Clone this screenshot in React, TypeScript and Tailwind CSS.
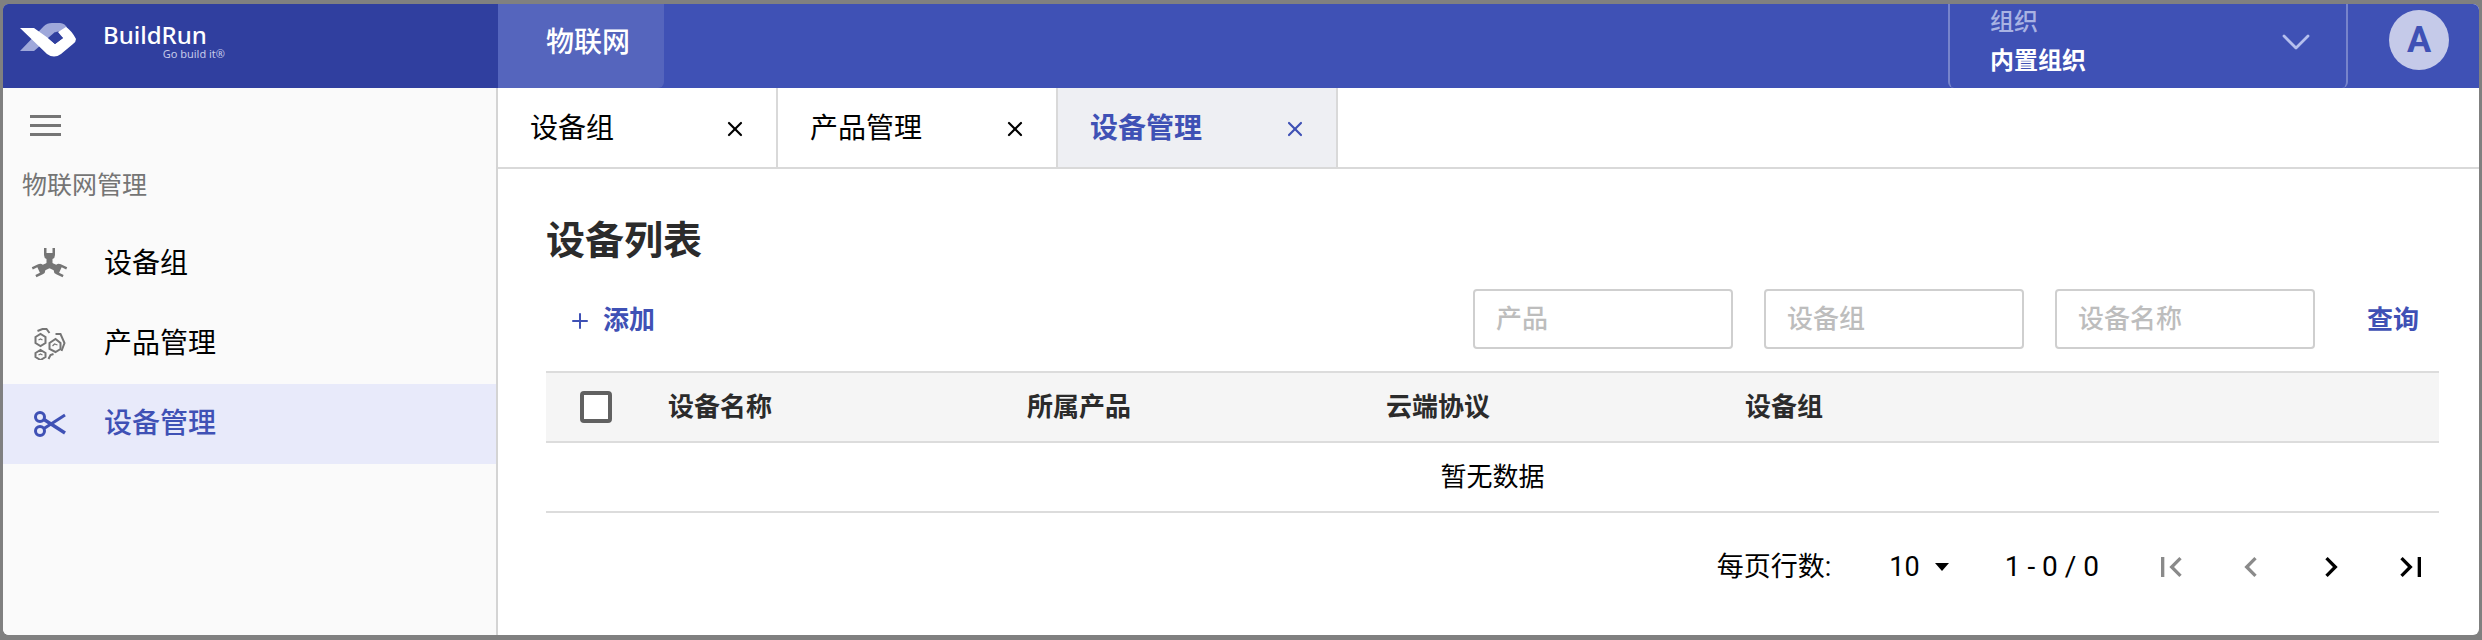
import { ChevronDown, Plus, X } from 'lucide-react'

const tabs = [
  { label: '设备组', active: false },
  { label: '产品管理', active: false },
  { label: '设备管理', active: true },
]

const columns = ['设备名称', '所属产品', '云端协议', '设备组']

function Logo() {
  return (
    <svg width="56" height="34" viewBox="0 0 56 34" className="shrink-0">
      <path d="M0 28 L24 3 Q27 0 32 0 L40 0 Q45 0 48 6 L36 9 L14 28 Z" fill="#9fa8da" />
      <path d="M0 5 L14 5 L28 15 L35 21 L43 15 L38 9 L46 4 Q52 8 56 16 Q56 19 53 21 L41 31 Q34 36 27 31 Z" fill="#ffffff" />
      <path d="M28 15 L35 9 L43 15 L35 21 Z" fill="#303f9f" />
    </svg>
  )
}

function WrenchIcon() {
  const head = 'M11 0 L11 7 Q11 10 13.5 11 L13.5 19 L19.5 19 L19.5 11 Q22 10 22 7 L22 0 L19.5 0 L19.5 5 L13.5 5 L13.5 0 Z'
  return (
    <svg width="33" height="32" viewBox="0 0 33 32" fill="#757575" className="shrink-0 overflow-visible">
      <path d={head} />
      <path d={head} transform="rotate(115 16.5 17)" />
      <path d={head} transform="rotate(-115 16.5 17)" />
    </svg>
  )
}

function HexesIcon() {
  return (
    <svg width="33" height="32" viewBox="0 0 32 32" fill="none" stroke="#757575" strokeWidth="2" className="shrink-0">
      <path d="M2 9 L7 6 L12 9 L12 15 L7 18 L2 15 Z" />
      <path d="M4 3 L9 1 L13 1 L16 5" />
      <path d="M16 15 L22 11 L27 15 L27 21 L22 24 L16 21 Z" />
      <path d="M22 6 L27 6 L31 15 L28 23" />
      <path d="M2 25 L7 22 L12 25 L12 29 L7 32 L2 29 Z" />
      <path d="M15 31 L17 27 L20 26" />
      <path d="M5 12 L7 11 L9 12 M19 18 L21 16 L24 17 M5 27 L7 26 L9 27" strokeWidth="1.2" />
    </svg>
  )
}

function ScissorsIcon() {
  return (
    <svg width="33" height="28" viewBox="0 0 33 28" fill="none" stroke="currentColor" className="shrink-0">
      <circle cx="7" cy="7" r="4.5" strokeWidth="3" />
      <circle cx="7" cy="21" r="4.5" strokeWidth="3" />
      <path d="M11 9.5 L32 23" strokeWidth="3.4" />
      <path d="M11 18.5 L32 5" strokeWidth="3" />
    </svg>
  )
}

// material paging glyphs, the reference draws them at ~40px
function PageIcon({ d, className }: { d: string; className: string }) {
  return (
    <svg className={className} width="40" height="40" viewBox="0 0 24 24" fill="currentColor">
      <path d={d} />
    </svg>
  )
}

function SearchField({ placeholder }: { placeholder: string }) {
  return (
    <div className="flex h-[60px] w-[260px] items-center rounded-[4px] border-2 border-[#cfcfcf] pl-[21px] text-[26px] font-medium text-[#bdbdbd]">
      {placeholder}
    </div>
  )
}

export default function App() {
  return (
    <div className="h-[640px] w-[2482px] overflow-hidden bg-[#808080] pb-[5px] pl-[3px] pr-[3px] pt-[4px] font-['Roboto','Noto_Sans_CJK_SC',sans-serif]">
      <div className="flex h-[631px] flex-col overflow-hidden rounded-[6px] bg-white">
        {/* top bar */}
        <header className="flex h-[84px] shrink-0 bg-[#3f51b5] text-white">
          <div className="flex w-[495px] items-start bg-[#303f9f] pl-[17px] pt-[19px]">
            <Logo />
            <div className="ml-[27px] w-[122px] font-['Noto_Sans',sans-serif]">
              <div className="text-[24px] font-medium leading-[24px]">BuildRun</div>
              <div className="mt-[1px] text-right text-[11px] leading-[11px] text-[#c5cae9]">Go build it®</div>
            </div>
          </div>
          <div className="flex w-[166px] items-center justify-center rounded-br-[6px] bg-[#5565bd] pb-[6px] pl-[14px] text-[28px] font-medium">物联网</div>
          <div className="flex-1" />
          <div className="flex w-[400px] items-center justify-between rounded-b-[6px] border-x-2 border-[#7784cb] pl-[40px] pr-[26px]">
            <div>
              <div className="mt-[-9px] text-[24px] font-medium leading-[30px] text-[#a9b3e3]">组织</div>
              <div className="mt-[9px] text-[24px] font-bold leading-[30px]">内置组织</div>
            </div>
            <ChevronDown size={48} strokeWidth={1.4} className="mb-[9px] text-[#b5bfee]" />
          </div>
          <div className="flex w-[131px] items-start justify-center pl-[11px] pt-[6px]">
            <div className="flex h-[60px] w-[60px] items-center justify-center rounded-full bg-[#c5cae9] text-[36px] font-bold text-[#3f51b5]">A</div>
          </div>
        </header>

        <div className="flex min-h-0 flex-1">
          {/* sidebar */}
          <aside className="w-[495px] shrink-0 border-r-2 border-[#d4d4d4] bg-[#fafafa]">
            <div className="pl-[27px] pt-[27px]">
              <div className="flex h-[21px] w-[31px] flex-col justify-between">
                <div className="h-[3px] bg-[#757575]" />
                <div className="h-[3px] bg-[#757575]" />
                <div className="h-[3px] bg-[#757575]" />
              </div>
            </div>
            <div className="pl-[19px] pt-[34px] text-[25px] leading-[32px] text-[#757575]">物联网管理</div>
            <nav className="mt-[22px]">
              <div className="flex h-[80px] items-center gap-[38px] pl-[30px] text-[28px] text-black">
                <WrenchIcon />
                设备组
              </div>
              <div className="flex h-[80px] items-center gap-[38px] pl-[30px] text-[28px] text-black">
                <HexesIcon />
                产品管理
              </div>
              <div className="flex h-[80px] items-center gap-[38px] bg-[#e8eafa] pl-[30px] text-[28px] font-medium text-[#3f51b5]">
                <ScissorsIcon />
                设备管理
              </div>
            </nav>
          </aside>

          <main className="flex min-w-0 flex-1 flex-col">
            {/* tab strip */}
            <div className="flex h-[81px] shrink-0 border-b-2 border-[#d9d9d9]">
              {tabs.map((t) => (
                <div
                  key={t.label}
                  className={`flex w-[280px] items-center justify-between border-r-2 border-[#d9d9d9] pl-[32px] pr-[29px] pt-[3px] text-[28px] ${t.active ? 'bg-[#eeeff3] font-bold text-[#3f51b5]' : 'text-black'}`}
                >
                  {t.label}
                  <X size={24} strokeWidth={2.2} className={t.active ? 'text-[#3f51b5]' : 'text-black'} />
                </div>
              ))}
            </div>

            <div className="flex flex-1 flex-col pl-[48px] pr-[40px]">
              <h1 className="pt-[47px] text-[39px] font-bold leading-[50px] text-[#2b2b2b]">设备列表</h1>

              <div className="mt-[23px] flex h-[60px] items-center">
                <div className="flex items-center pl-[22px] pt-[3px] text-[26px] font-bold text-[#3f51b5]">
                  <Plus size={24} strokeWidth={2} className="mr-[11px]" />
                  添加
                </div>
                <div className="flex-1" />
                <div className="flex items-center gap-[31px]">
                  <SearchField placeholder="产品" />
                  <SearchField placeholder="设备组" />
                  <SearchField placeholder="设备名称" />
                </div>
                <div className="ml-[52px] mr-[20px] pt-[3px] text-[26px] font-bold text-[#3f51b5]">查询</div>
              </div>

              {/* table */}
              <div className="mt-[22px] flex h-[72px] items-center border-y-2 border-[#dcdcdc] bg-[#f5f5f5] text-[26px] font-bold text-[#2b2b2b]">
                <div className="ml-[34px] h-[32px] w-[32px] shrink-0 rounded-[4px] border-[4px] border-[#616161] bg-white" />
                <div className="ml-[56px] flex">
                  {columns.map((c) => (
                    <div key={c} className="w-[359px]">{c}</div>
                  ))}
                </div>
              </div>
              <div className="flex h-[70px] items-center justify-center border-b-2 border-[#dcdcdc] text-[26px] text-black">暂无数据</div>

              {/* pagination */}
              <div className="flex h-[108px] items-center justify-end text-[27px] text-black">
                <span>每页行数:</span>
                <span className="ml-[58px]">10</span>
                <svg className="ml-[14px]" width="16" height="10" viewBox="0 0 16 10" fill="currentColor">
                  <path d="M1 1 H15 L8 9 Z" />
                </svg>
                <span className="ml-[55px] text-[28px]">1 - 0 / 0</span>
                <div className="ml-[52px] mr-[8px] flex items-center gap-[40px]">
                  <PageIcon d="M18.41 16.59 13.82 12l4.59-4.59L17 6l-6 6 6 6zM6 6h2v12H6z" className="text-[#8a8a8a]" />
                  <PageIcon d="M15.41 7.41 14 6l-6 6 6 6 1.41-1.41L10.83 12z" className="text-[#8a8a8a]" />
                  <PageIcon d="M8.59 16.59 10 18l6-6-6-6-1.41 1.41L13.17 12z" className="text-black" />
                  <PageIcon d="M5.59 7.41 10.18 12l-4.59 4.59L7 18l6-6-6-6zM16 6h2v12h-2z" className="text-black" />
                </div>
              </div>
            </div>
          </main>
        </div>
      </div>
    </div>
  )
}
